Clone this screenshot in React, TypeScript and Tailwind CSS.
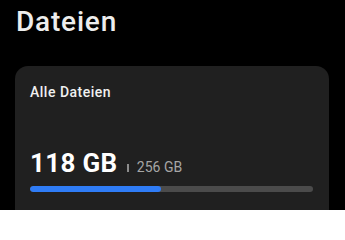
export default function App() {
  return (
    <div
      className="w-[345px] h-[210px] overflow-hidden bg-black text-white"
      style={{ fontFamily: 'Roboto, "Noto Sans", sans-serif' }}
    >
      <div className="pt-[5px] pl-[16px] text-[28px] leading-[34px] font-medium tracking-[0.8px] text-[#ededed]">
        Dateien
      </div>
      <div className="mt-[27px] mx-[15px] w-[314px] h-[170px] rounded-[13px] bg-[#202020] px-[15px] pt-[16px]">
        <div className="text-[14px] leading-[20px] font-medium tracking-[0.5px] text-[#f0f0f0]">Alle Dateien</div>
        <div className="mt-[46px] flex items-baseline">
          <span className="text-[26px] leading-[30px] font-bold tracking-[0.3px] text-white">118 GB</span>
          <span className="ml-[10px] inline-block w-[1.5px] h-[8px] bg-[#8c8c8c]" />
          <span className="ml-[8px] text-[14px] text-[#a6a6a6]">256 GB</span>
        </div>
        <div className="mt-[8px] h-[6px] w-[283px] rounded-full bg-[#4b4b4b] overflow-hidden flex">
          <div className="h-full w-[131px] rounded-full bg-[#2f7cf6]" />
        </div>
      </div>
    </div>
  );
}
